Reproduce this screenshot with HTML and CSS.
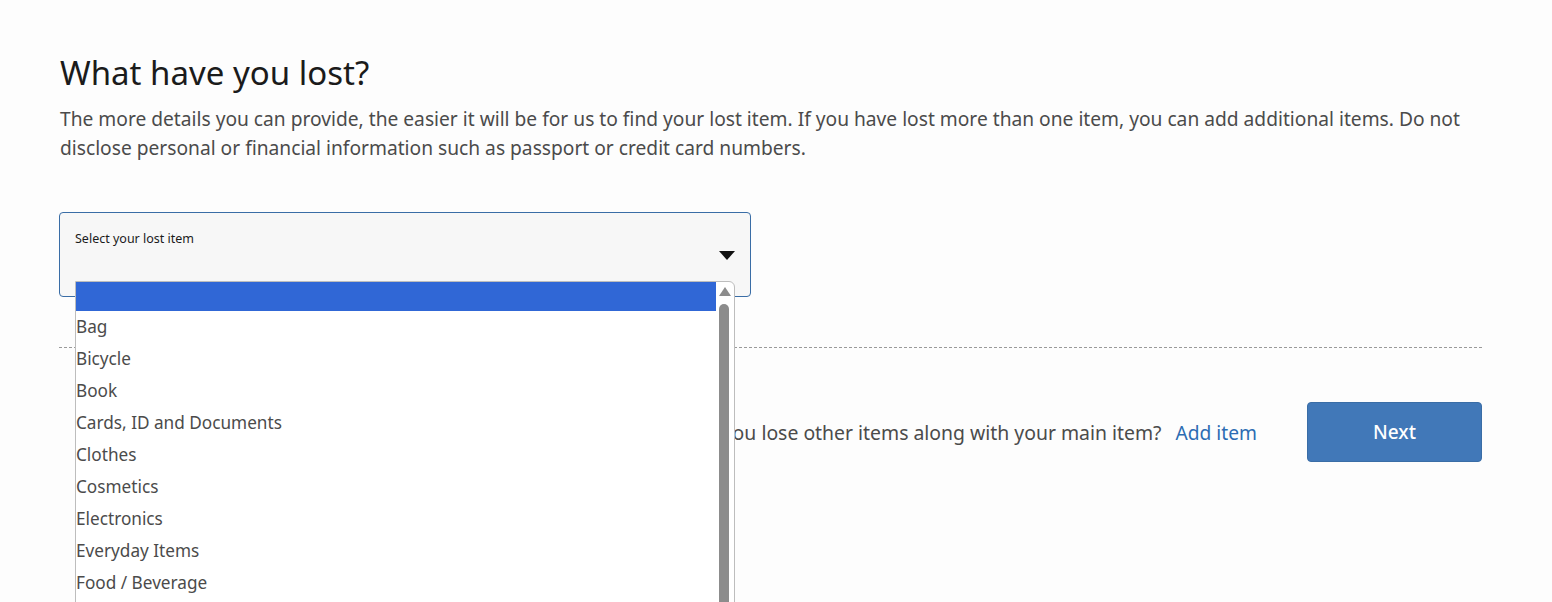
FILE: index.html
```html
<!DOCTYPE html>
<html lang="en">
<head>
<meta charset="utf-8">
<title>What have you lost?</title>
<link rel="stylesheet" href="styles.css">
</head>
<body>
<main class="page">
  <h1 class="title">What have you lost?</h1>
  <p class="intro">The more details you can provide, the easier it will be for us to find your lost item. If you have lost more than one item, you can add additional items. Do not disclose personal or financial information such as passport or credit card numbers.</p>

  <div class="field">
    <div class="select">
      <span class="select-label">Select your lost item</span>
      <span class="caret"></span>
    </div>
    <div class="listbox">
      <ul class="options">
        <li class="option selected">&nbsp;</li>
        <li class="option">Bag</li>
        <li class="option">Bicycle</li>
        <li class="option">Book</li>
        <li class="option">Cards, ID and Documents</li>
        <li class="option">Clothes</li>
        <li class="option">Cosmetics</li>
        <li class="option">Electronics</li>
        <li class="option">Everyday Items</li>
        <li class="option">Food / Beverage</li>
      </ul>
      <div class="scrollbar">
        <span class="scroll-up"></span>
        <span class="thumb"></span>
      </div>
    </div>
  </div>

  <hr class="divider">

  <div class="actions">
    <span class="question">Did you lose other items along with your main item?</span>
    <a class="add-link" href="#">Add item</a>
    <button class="next" type="button">Next</button>
  </div>
</main>
</body>
</html>
```
FILE: styles.css
```css
html, body {
  margin: 0;
  padding: 0;
  background: #fdfdfd;
  height: 100%;
  overflow: hidden;
}
body {
  font-family: "Noto Sans", "Open Sans", sans-serif;
  color: #4a4a4a;
}
.page {
  padding: 50px 70px 0 59px;
}
.title {
  margin: 0 0 0 1px;
  font-size: 33px;
  font-weight: 400;
  color: #1b1b1b;
  line-height: 46px;
}
.intro {
  margin: 8px 0 0 1px;
  font-size: 19.2px;
  line-height: 29px;
  color: #4b4b4b;
  width: 1420px;
}
.field {
  position: relative;
  width: 692px;
  margin-top: 50px;
}
.select {
  box-sizing: border-box;
  height: 85px;
  border: 1px solid #3a6da6;
  border-radius: 4px;
  background: #f7f7f7;
  position: relative;
}
.select-label {
  position: absolute;
  left: 15px;
  top: 17px;
  font-size: 12.5px;
  color: #1b1b1b;
}
.caret {
  position: absolute;
  right: 15px;
  top: 38px;
  width: 0;
  height: 0;
  border-left: 8px solid transparent;
  border-right: 8px solid transparent;
  border-top: 9px solid #111;
}
.listbox {
  position: absolute;
  left: 16px;
  top: 69px;
  width: 660px;
  height: 340px;
  box-sizing: border-box;
  border: 1px solid #bdbdbd;
  border-radius: 0 6px 0 0;
  background: #fff;
  display: flex;
  overflow: hidden;
  z-index: 5;
}
.options {
  list-style: none;
  margin: 0;
  padding: 0;
  flex: 1;
  font-size: 17.2px;
  color: #4b4b4b;
}
.option {
  height: 32px;
  line-height: 32px;
  padding-left: 0;
}
.option.selected {
  height: 29px;
  background: #3067d6;
}
.scrollbar {
  width: 18px;
  position: relative;
}
.scroll-up {
  position: absolute;
  left: 3px;
  top: 5px;
  width: 0;
  height: 0;
  border-left: 6px solid transparent;
  border-right: 6px solid transparent;
  border-bottom: 9px solid #8c8c8c;
}
.thumb {
  position: absolute;
  left: 3px;
  top: 22px;
  width: 10px;
  height: 400px;
  border-radius: 5px 5px 0 0;
  background: #8c8c8c;
}
.divider {
  border: 0;
  border-top: 1px dashed #9a9a9a;
  margin: 50px 0 0 0;
  width: 1423px;
}
.actions {
  width: 1423px;
  display: flex;
  justify-content: flex-end;
  align-items: center;
  margin-top: 54px;
}
.question {
  font-size: 19.4px;
  color: #4b4b4b;
}
.add-link {
  margin-left: 14px;
  font-size: 19.2px;
  color: #2c6cb3;
  text-decoration: none;
}
.next {
  margin-left: 50px;
  width: 175px;
  height: 60px;
  border: 1px solid #3a6da6;
  border-radius: 4px;
  background: #4178b8;
  color: #fff;
  font-family: inherit;
  font-size: 19px;
  font-weight: 500;
}
```
